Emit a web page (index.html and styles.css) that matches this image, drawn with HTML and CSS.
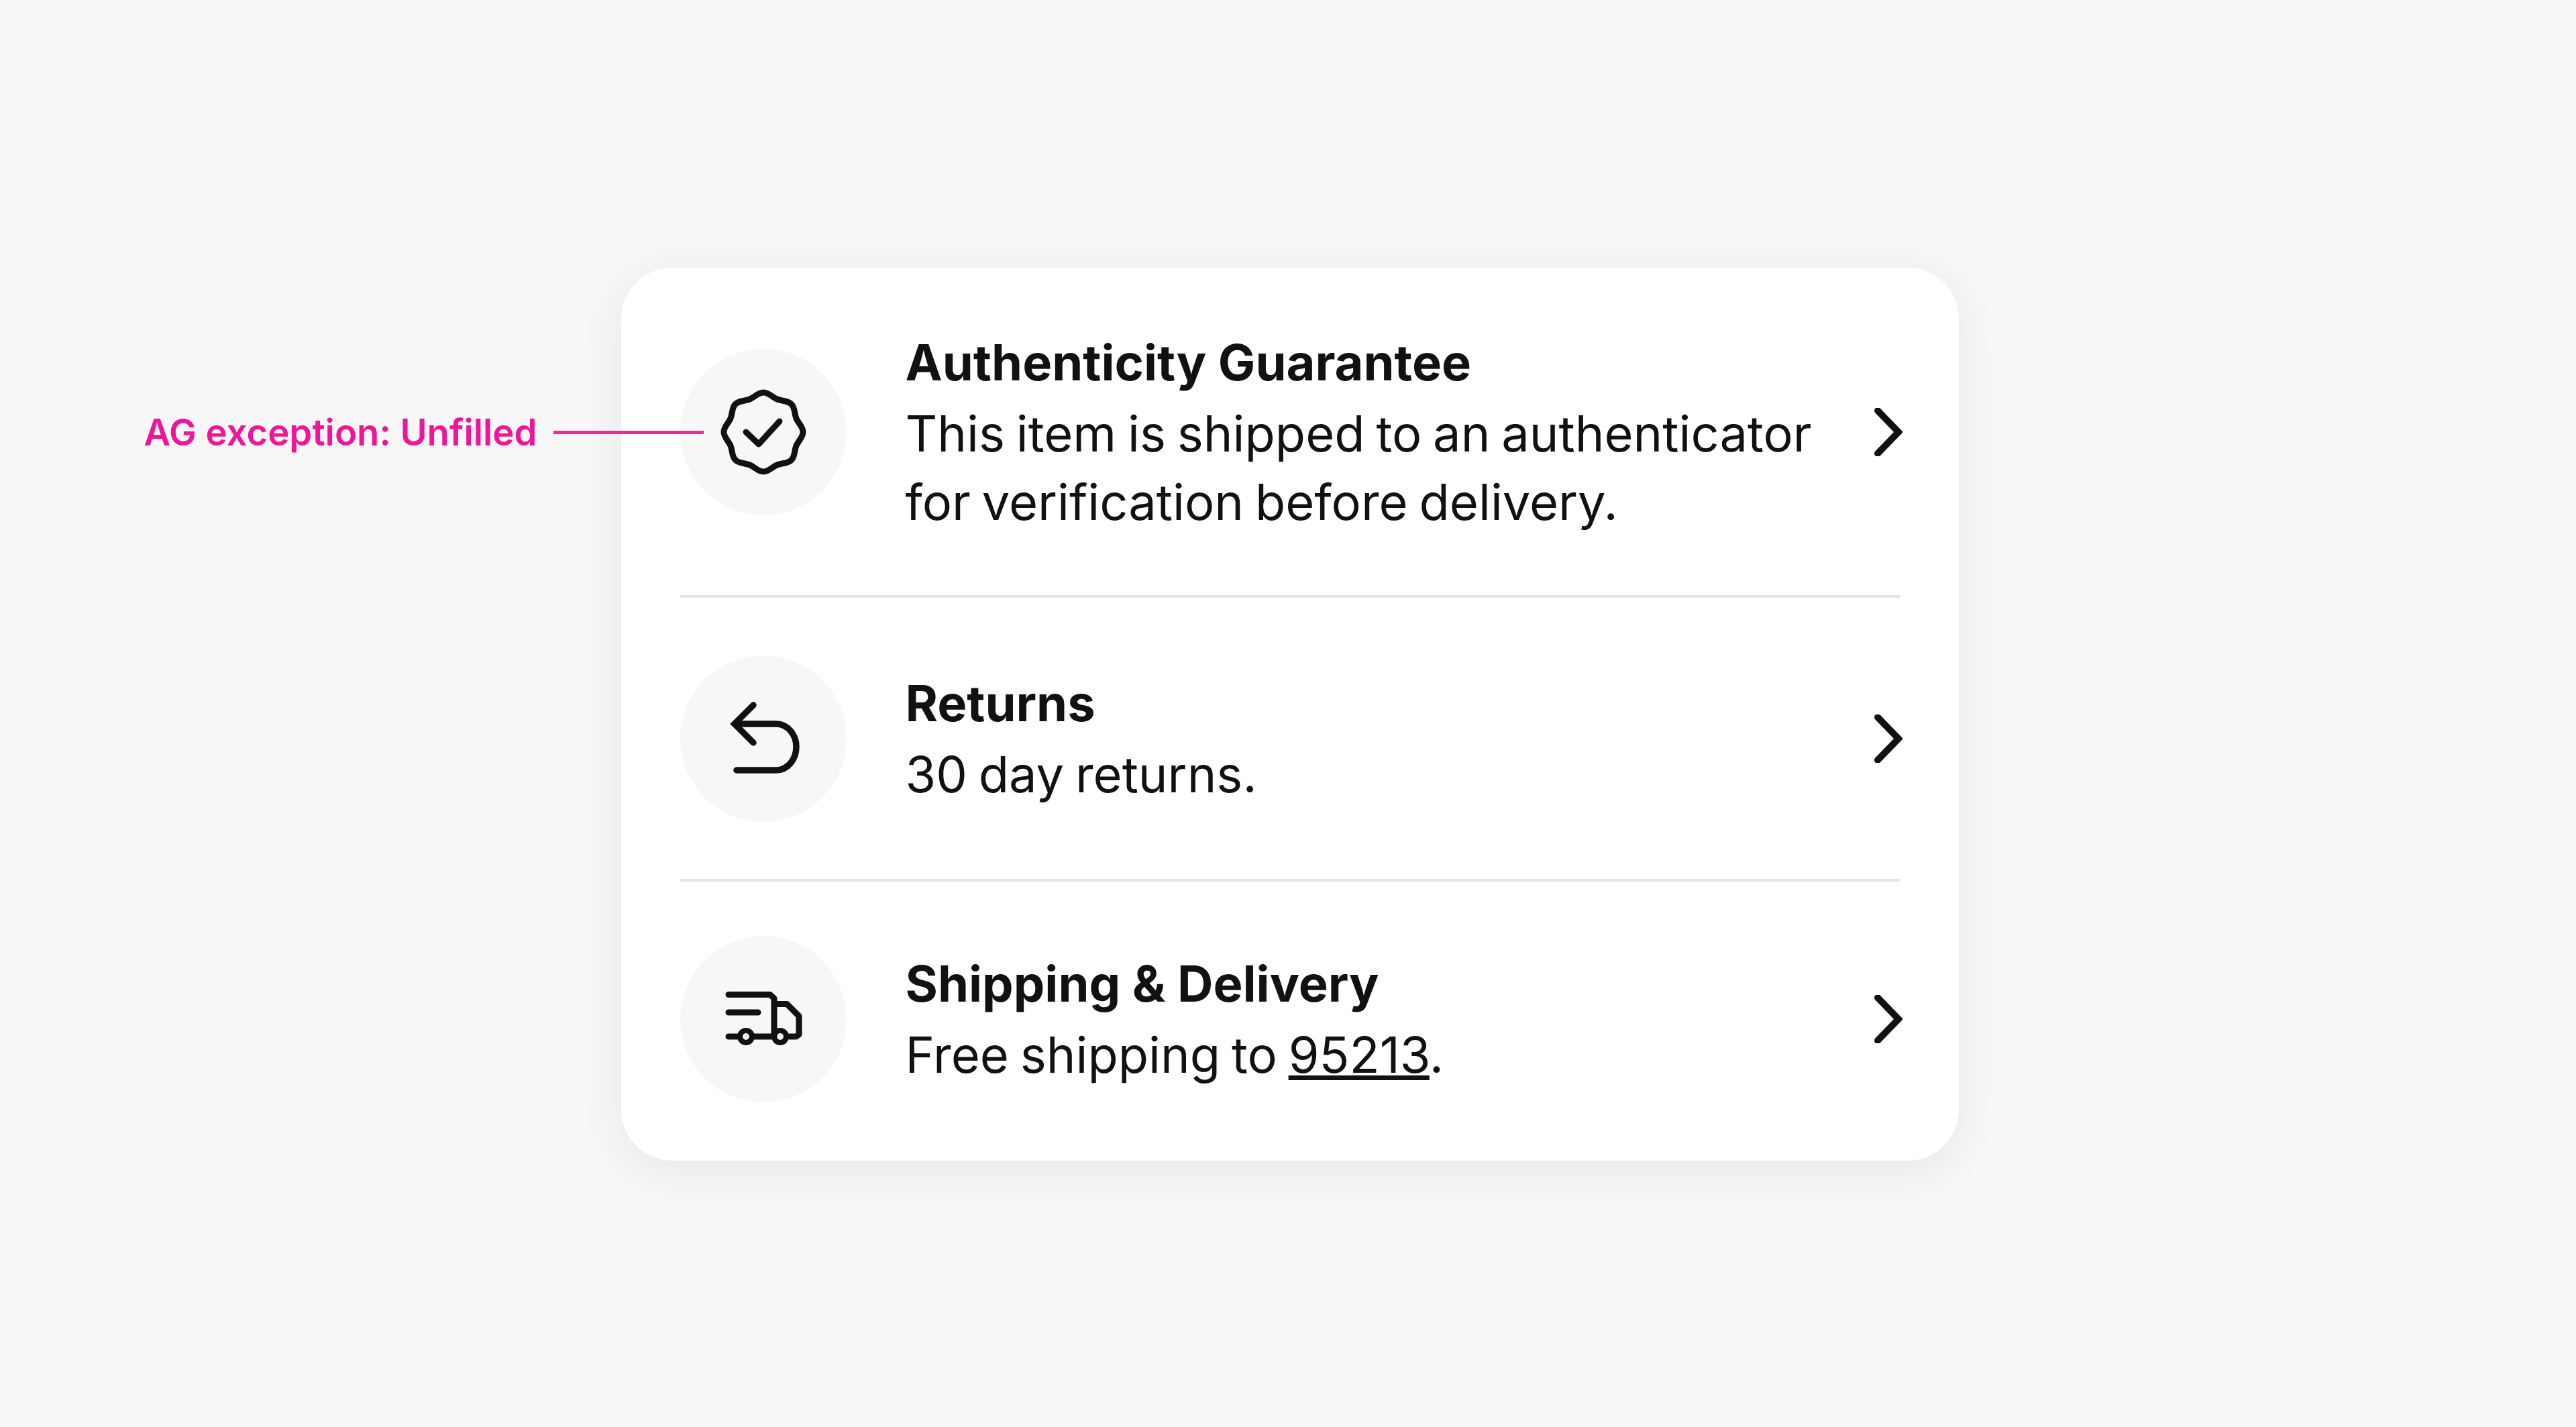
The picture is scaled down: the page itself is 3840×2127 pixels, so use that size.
FILE: index.html
```html
<!DOCTYPE html>
<html lang="en">
<head>
    <meta charset="UTF-8">
    <link rel="stylesheet" href="styles.css">
    <title>Item details</title>
</head>
<body>
    <div class="stage">
        <div class="card">
            <div class="note">
                <span class="note-text">AG exception: Unfilled</span>
                <span class="note-line"></span>
            </div>
            <div class="row row-first">
                <div class="badge">
                    <svg class="icon" viewBox="0 0 128 128" fill="none" stroke="#111" stroke-width="9" stroke-linejoin="round" stroke-linecap="round">
                        <path d="M64 5 C72 5 76.9 12 84.3 15 C91.7 18.1 100.1 16.6 105.7 22.3 C111.4 27.9 109.9 36.3 113 43.7 C116 51.1 123 56 123 64 C123 72 116 76.9 113 84.3 C109.9 91.7 111.4 100.1 105.7 105.7 C100.1 111.4 91.7 109.9 84.3 113 C76.9 116 72 123 64 123 C56 123 51.1 116 43.7 113 C36.3 109.9 27.9 111.4 22.3 105.7 C16.6 100.1 18.1 91.7 15 84.3 C12 76.9 5 72 5 64 C5 56 12 51.1 15 43.7 C18.1 36.3 16.6 27.9 22.3 22.3 C27.9 16.6 36.3 18.1 43.7 15 C51.1 12 56 5 64 5 Z"/>
                        <path d="M38 64 L57 82 L88 48"/>
                    </svg>
                </div>
                <div class="copy">
                    <div class="title">Authenticity Guarantee</div>
                    <div class="desc">This item is shipped to an authenticator<br>for verification before delivery.</div>
                </div>
                <svg class="chevron" viewBox="0 0 44 72" fill="none" stroke="#111" stroke-width="10" stroke-linecap="round" stroke-linejoin="miter"><path d="M7 4 L38 36 L7 68"/></svg>
            </div>
            <div class="row row-second">
                <div class="badge">
                    <svg class="icon" viewBox="0 0 128 128" fill="none" stroke="#111" stroke-width="9.5" stroke-linecap="round" stroke-linejoin="miter">
                        <path d="M49 14 L21 42 L49 70"/>
                        <path d="M21 42 H83 C100 42 113 58 113 76 C113 95 100 111 83 111 H24"/>
                    </svg>
                </div>
                <div class="copy">
                    <div class="title">Returns</div>
                    <div class="desc">30 day returns.</div>
                </div>
                <svg class="chevron" viewBox="0 0 44 72" fill="none" stroke="#111" stroke-width="10" stroke-linecap="round" stroke-linejoin="miter"><path d="M7 4 L38 36 L7 68"/></svg>
            </div>
            <div class="row row-third">
                <div class="badge">
                    <svg class="icon" viewBox="0 0 128 128" fill="none" stroke="#111" stroke-width="9" stroke-linecap="round" stroke-linejoin="round">
                        <path d="M12 27.5 H74 L80 33 V90"/>
                        <path d="M83 41.5 H99 L117 59.5 V87 L113 90 H103"/>
                        <path d="M12 54 H56"/>
                        <path d="M12 90 H25 M51 90 H76"/>
                        <circle cx="38" cy="90" r="9" stroke-width="8"/>
                        <circle cx="89" cy="90" r="9" stroke-width="8"/>
                    </svg>
                </div>
                <div class="copy">
                    <div class="title">Shipping &amp; Delivery</div>
                    <div class="desc">Free shipping to <a class="zip" href="#">95213</a>.</div>
                </div>
                <svg class="chevron" viewBox="0 0 44 72" fill="none" stroke="#111" stroke-width="10" stroke-linecap="round" stroke-linejoin="miter"><path d="M7 4 L38 36 L7 68"/></svg>
            </div>
        </div>
    </div>
</body>
</html>
```

FILE: styles.css
```css
html, body {
    margin: 0;
    height: 100%;
}

body {
    background-color: #f7f7f7;
    color: #111;
    font-family: Inter, "Liberation Sans", sans-serif;
}

.stage {
    display: flex;
    justify-content: center;
    padding: 399px 0 0 5px;
}

.card {
    position: relative;
    width: 1994px;
    box-sizing: border-box;
    padding: 0 88px;
    background-color: #fff;
    border-radius: 76px;
    box-shadow: 0 14px 70px rgba(0, 0, 0, 0.07);
}

.row {
    display: flex;
    align-items: center;
    border-top: 4px solid #e5e5e5;
}

.row-first {
    padding: 90px 0 88px;
    border-top: none;
}

.row-second {
    padding: 86px 0 85px;
}

.row-third {
    padding: 81px 0 87px;
}

.badge {
    display: flex;
    flex: none;
    align-items: center;
    justify-content: center;
    width: 248px;
    height: 248px;
    border-radius: 50%;
    background-color: #f7f7f7;
}

.icon {
    width: 128px;
    height: 128px;
}

.copy {
    flex: 1;
    margin-left: 88px;
    font-size: 74px;
    line-height: 102px;
}

.title {
    margin-bottom: 4px;
    font-weight: 700;
}

.desc {
    font-weight: 400;
    word-spacing: -4px;
}

.zip {
    color: inherit;
    text-decoration: underline;
}

.chevron {
    flex: none;
    width: 44px;
    height: 72px;
    margin-right: -4px;
}

/* annotation sits outside the card, pointing at the first badge */
.note {
    position: absolute;
    top: 211px;
    right: 100%;
    display: flex;
    align-items: center;
    margin-right: -123px;
}

.note-text {
    color: #f0149b;
    font-size: 54.5px;
    font-weight: 600;
    line-height: 68px;
    white-space: nowrap;
}

.note-line {
    width: 224px;
    height: 5px;
    margin-left: 24px;
    background-color: #f0289b;
}
```
